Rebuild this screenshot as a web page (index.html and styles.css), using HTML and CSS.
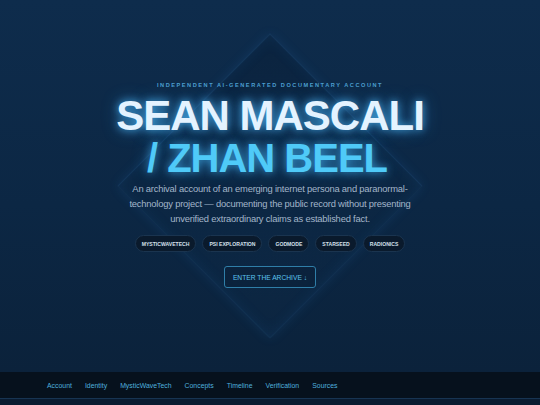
FILE: index.html
```html
<!DOCTYPE html>
<html>
<head>
<meta charset="utf-8">
<link rel="stylesheet" href="styles.css">
</head>
<body>
<section class="hero">
  <div class="diamond"></div>
  <div class="content">
    <p class="eyebrow">Independent AI-Generated Documentary Account</p>
    <h1 class="title"><span class="l1">SEAN MASCALI</span><span class="l2">/ ZHAN BEEL</span></h1>
    <p class="lead">An archival account of an emerging internet persona and paranormal-<br>technology project — documenting the public record without presenting<br>unverified extraordinary claims as established fact.</p>
    <ul class="tags">
      <li>MysticWaveTech</li>
      <li>PSI Exploration</li>
      <li>Godmode</li>
      <li>Starseed</li>
      <li>Radionics</li>
    </ul>
    <a class="cta" href="#account">Enter the Archive ↓</a>
  </div>
</section>
<nav class="nav">
  <a href="#account">Account</a>
  <a href="#identity">Identity</a>
  <a href="#mwt">MysticWaveTech</a>
  <a href="#concepts">Concepts</a>
  <a href="#timeline">Timeline</a>
  <a href="#verification">Verification</a>
  <a href="#sources">Sources</a>
</nav>
<div class="after"></div>
</body>
</html>
```
FILE: styles.css
```css
* { box-sizing: border-box; }
html, body { margin: 0; padding: 0; }
body {
  width: 540px;
  height: 405px;
  overflow: hidden;
  background: #0b2139;
  font-family: "Liberation Sans", Arial, sans-serif;
}
.hero {
  position: relative;
  height: 372px;
  overflow: hidden;
  background: linear-gradient(180deg, #0e2c4c 0%, #0c2744 55%, #0b223b 100%);
}
.diamond {
  position: absolute;
  left: 162px;
  top: 78px;
  width: 216px;
  height: 216px;
  transform: rotate(45deg);
  border: 1px solid rgba(70, 150, 215, 0.12);
  background: linear-gradient(135deg, rgba(8, 28, 52, 0.5) 0%, rgba(12, 40, 68, 0.2) 60%, rgba(20, 60, 100, 0.1) 100%);
  box-shadow: 0 0 12px rgba(40, 130, 210, 0.14), inset 0 0 14px rgba(40, 130, 210, 0.1);
}
.content {
  position: relative;
  display: flex;
  flex-direction: column;
  align-items: center;
  padding-top: 82px;
  text-align: center;
}
.eyebrow {
  margin: 0;
  font-size: 5.6px;
  font-weight: bold;
  letter-spacing: 1.55px;
  text-transform: uppercase;
  color: #4c9fcf;
}
.title {
  margin: 7px 0 0;
  display: flex;
  flex-direction: column;
  align-items: center;
  font-weight: bold;
  line-height: 42px;
  letter-spacing: -1px;
}
.l1 {
  font-size: 42px;
  color: #e4f3ff;
  text-shadow: 0 0 8px rgba(80, 190, 255, 0.85), 0 0 18px rgba(60, 170, 255, 0.45);
}
.l2 {
  font-size: 40px;
  margin-right: 6px;
  color: #4fcaf8;
  text-shadow: 0 0 8px rgba(70, 190, 255, 0.7), 0 0 18px rgba(60, 170, 255, 0.4);
}
.lead {
  margin: 2px 0 0;
  font-size: 9.4px;
  letter-spacing: -0.2px;
  line-height: 15px;
  white-space: nowrap;
  color: #a3b6ca;
}
.tags {
  list-style: none;
  margin: 9px 0 0;
  padding: 0;
  display: flex;
  gap: 6px;
}
.tags li {
  height: 17px;
  padding: 0 6px;
  display: flex;
  align-items: center;
  border-radius: 9px;
  background: #0a1a2c;
  border: 1px solid #1a344f;
  font-size: 5.1px;
  font-weight: bold;
  text-transform: uppercase;
  color: #d6e1ec;
}
.cta {
  margin-top: 14px;
  height: 22px;
  padding: 0 8px;
  display: flex;
  align-items: center;
  border: 1px solid #2f7ea8;
  border-radius: 3px;
  background: rgba(10, 30, 52, 0.4);
  font-size: 6.7px;
  text-transform: uppercase;
  text-decoration: none;
  color: #5cc4ee;
}
.nav {
  height: 26px;
  display: flex;
  align-items: center;
  gap: 13px;
  padding-left: 47px;
  background: #06111d;
}
.nav a {
  font-size: 6.9px;
  text-decoration: none;
  color: #4fb0dd;
}
.after {
  height: 7px;
  background: #0a1c31;
  border-top: 1px solid #173452;
}
```
